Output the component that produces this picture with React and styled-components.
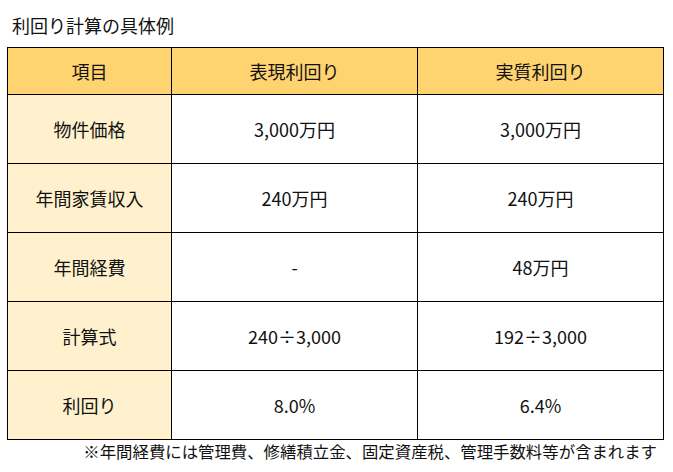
import React from "react";
import styled, { createGlobalStyle } from "styled-components";

const rows = [
  { label: "物件価格", surface: "3,000万円", real: "3,000万円" },
  { label: "年間家賃収入", surface: "240万円", real: "240万円" },
  { label: "年間経費", surface: "-", real: "48万円" },
  { label: "計算式", surface: "240÷3,000", real: "192÷3,000" },
  { label: "利回り", surface: "8.0%", real: "6.4%" },
];

function App() {
  return (
    <Wrapper>
      <GlobalStyle />
      <Title>利回り計算の具体例</Title>
      <Table>
        <colgroup>
          <col style={{ width: "164px" }} />
          <col style={{ width: "246px" }} />
          <col style={{ width: "246px" }} />
        </colgroup>
        <thead>
          <tr>
            <HeadCell>項目</HeadCell>
            <HeadCell>表現利回り</HeadCell>
            <HeadCell>実質利回り</HeadCell>
          </tr>
        </thead>
        <tbody>
          {rows.map((row) => (
            <tr key={row.label}>
              <LabelCell>{row.label}</LabelCell>
              <Cell>{row.surface}</Cell>
              <Cell>{row.real}</Cell>
            </tr>
          ))}
        </tbody>
      </Table>
      <Note>※年間経費には管理費、修繕積立金、固定資産税、管理手数料等が含まれます</Note>
    </Wrapper>
  );
}

const GlobalStyle = createGlobalStyle`
  body {
    margin: 0;
    background: #ffffff;
    font-family: "Noto Sans CJK JP", "Noto Sans", sans-serif;
    color: #111111;
  }
`;

const Wrapper = styled.div`
  width: 673px;
  height: 472px;
  padding: 12px 0 0 7px;
  box-sizing: border-box;
`;

const Title = styled.h2`
  margin: 0 0 9px 5px;
  font-size: 18px;
  font-weight: 400;
  line-height: 26px;
`;

const Table = styled.table`
  width: 656px;
  table-layout: fixed;
  border-collapse: collapse;
  border: 1.5px solid #000;
`;

const HeadCell = styled.th`
  height: 46px;
  padding: 0;
  background: #ffd36f;
  border: 1.5px solid #000;
  font-size: 18px;
  font-weight: 400;
  text-align: center;
`;

const Cell = styled.td`
  height: 68px;
  padding: 0;
  background: ${(props) => props.background || "#ffffff"};
  border: 1.5px solid #000;
  font-size: 18px;
  text-align: center;
`;

const LabelCell = styled(Cell).attrs({ background: "#fff1cd" })``;

const Note = styled.p`
  width: 650px;
  margin: 0;
  font-size: 16.4px;
  line-height: 22px;
  text-align: right;
  white-space: nowrap;
`;

export default App;
